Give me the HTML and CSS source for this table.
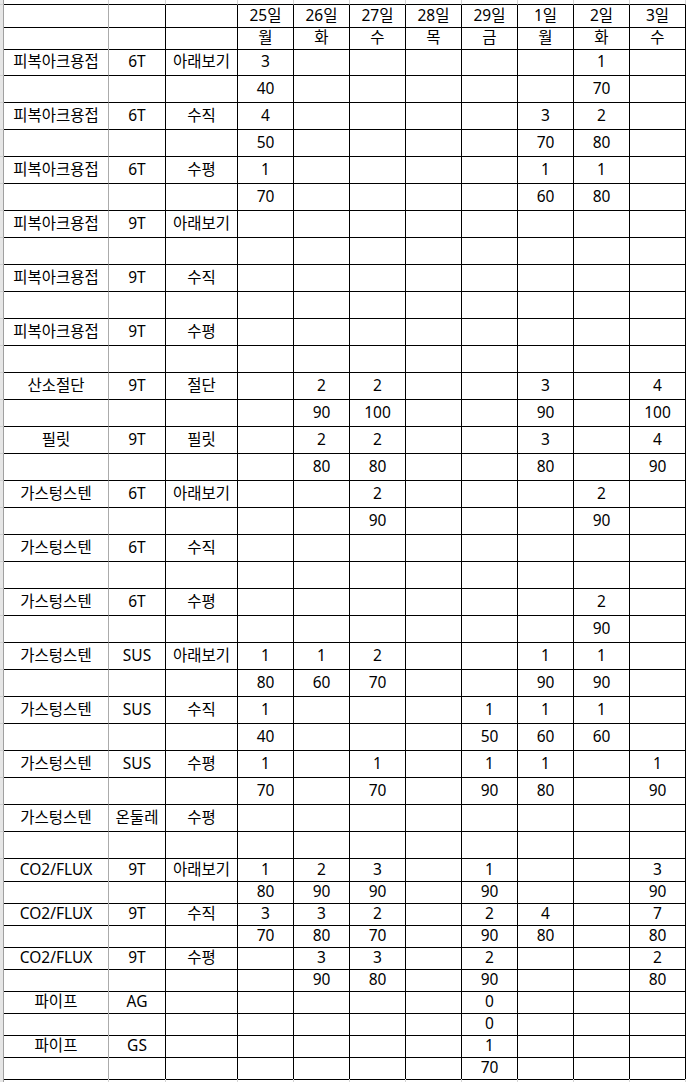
FILE: index.html
```html
<!DOCTYPE html>
<html lang="ko">
<head>
<meta charset="utf-8">
<title>일정표</title>
<link rel="stylesheet" href="styles.css">
</head>
<body>
<div class="sheet">
<div class="row edge top"><div class="rh"></div><div></div><div></div><div></div><div></div><div></div><div></div><div></div><div></div><div></div><div></div><div></div></div>
<div class="row s"><div class="rh"></div><div></div><div></div><div></div><div>25일</div><div>26일</div><div>27일</div><div>28일</div><div>29일</div><div>1일</div><div>2일</div><div>3일</div></div>
<div class="row s"><div class="rh"></div><div></div><div></div><div></div><div>월</div><div>화</div><div>수</div><div>목</div><div>금</div><div>월</div><div>화</div><div>수</div></div>

<div class="row"><div class="rh"></div><div>피복아크용접</div><div>6T</div><div>아래보기</div><div>3</div><div></div><div></div><div></div><div></div><div></div><div>1</div><div></div></div>
<div class="row"><div class="rh"></div><div></div><div></div><div></div><div>40</div><div></div><div></div><div></div><div></div><div></div><div>70</div><div></div></div>
<div class="row"><div class="rh"></div><div>피복아크용접</div><div>6T</div><div>수직</div><div>4</div><div></div><div></div><div></div><div></div><div>3</div><div>2</div><div></div></div>
<div class="row"><div class="rh"></div><div></div><div></div><div></div><div>50</div><div></div><div></div><div></div><div></div><div>70</div><div>80</div><div></div></div>
<div class="row"><div class="rh"></div><div>피복아크용접</div><div>6T</div><div>수평</div><div>1</div><div></div><div></div><div></div><div></div><div>1</div><div>1</div><div></div></div>
<div class="row"><div class="rh"></div><div></div><div></div><div></div><div>70</div><div></div><div></div><div></div><div></div><div>60</div><div>80</div><div></div></div>
<div class="row"><div class="rh"></div><div>피복아크용접</div><div>9T</div><div>아래보기</div><div></div><div></div><div></div><div></div><div></div><div></div><div></div><div></div></div>
<div class="row"><div class="rh"></div><div></div><div></div><div></div><div></div><div></div><div></div><div></div><div></div><div></div><div></div><div></div></div>
<div class="row"><div class="rh"></div><div>피복아크용접</div><div>9T</div><div>수직</div><div></div><div></div><div></div><div></div><div></div><div></div><div></div><div></div></div>
<div class="row"><div class="rh"></div><div></div><div></div><div></div><div></div><div></div><div></div><div></div><div></div><div></div><div></div><div></div></div>
<div class="row"><div class="rh"></div><div>피복아크용접</div><div>9T</div><div>수평</div><div></div><div></div><div></div><div></div><div></div><div></div><div></div><div></div></div>
<div class="row"><div class="rh"></div><div></div><div></div><div></div><div></div><div></div><div></div><div></div><div></div><div></div><div></div><div></div></div>
<div class="row"><div class="rh"></div><div>산소절단</div><div>9T</div><div>절단</div><div></div><div>2</div><div>2</div><div></div><div></div><div>3</div><div></div><div>4</div></div>
<div class="row"><div class="rh"></div><div></div><div></div><div></div><div></div><div>90</div><div>100</div><div></div><div></div><div>90</div><div></div><div>100</div></div>
<div class="row"><div class="rh"></div><div>필릿</div><div>9T</div><div>필릿</div><div></div><div>2</div><div>2</div><div></div><div></div><div>3</div><div></div><div>4</div></div>
<div class="row"><div class="rh"></div><div></div><div></div><div></div><div></div><div>80</div><div>80</div><div></div><div></div><div>80</div><div></div><div>90</div></div>
<div class="row"><div class="rh"></div><div>가스텅스텐</div><div>6T</div><div>아래보기</div><div></div><div></div><div>2</div><div></div><div></div><div></div><div>2</div><div></div></div>
<div class="row"><div class="rh"></div><div></div><div></div><div></div><div></div><div></div><div>90</div><div></div><div></div><div></div><div>90</div><div></div></div>
<div class="row"><div class="rh"></div><div>가스텅스텐</div><div>6T</div><div>수직</div><div></div><div></div><div></div><div></div><div></div><div></div><div></div><div></div></div>
<div class="row"><div class="rh"></div><div></div><div></div><div></div><div></div><div></div><div></div><div></div><div></div><div></div><div></div><div></div></div>
<div class="row"><div class="rh"></div><div>가스텅스텐</div><div>6T</div><div>수평</div><div></div><div></div><div></div><div></div><div></div><div></div><div>2</div><div></div></div>
<div class="row"><div class="rh"></div><div></div><div></div><div></div><div></div><div></div><div></div><div></div><div></div><div></div><div>90</div><div></div></div>
<div class="row"><div class="rh"></div><div>가스텅스텐</div><div>SUS</div><div>아래보기</div><div>1</div><div>1</div><div>2</div><div></div><div></div><div>1</div><div>1</div><div></div></div>
<div class="row"><div class="rh"></div><div></div><div></div><div></div><div>80</div><div>60</div><div>70</div><div></div><div></div><div>90</div><div>90</div><div></div></div>
<div class="row"><div class="rh"></div><div>가스텅스텐</div><div>SUS</div><div>수직</div><div>1</div><div></div><div></div><div></div><div>1</div><div>1</div><div>1</div><div></div></div>
<div class="row"><div class="rh"></div><div></div><div></div><div></div><div>40</div><div></div><div></div><div></div><div>50</div><div>60</div><div>60</div><div></div></div>
<div class="row"><div class="rh"></div><div>가스텅스텐</div><div>SUS</div><div>수평</div><div>1</div><div></div><div>1</div><div></div><div>1</div><div>1</div><div></div><div>1</div></div>
<div class="row"><div class="rh"></div><div></div><div></div><div></div><div>70</div><div></div><div>70</div><div></div><div>90</div><div>80</div><div></div><div>90</div></div>
<div class="row"><div class="rh"></div><div>가스텅스텐</div><div>온둘레</div><div>수평</div><div></div><div></div><div></div><div></div><div></div><div></div><div></div><div></div></div>
<div class="row"><div class="rh"></div><div></div><div></div><div></div><div></div><div></div><div></div><div></div><div></div><div></div><div></div><div></div></div>

<div class="row s"><div class="rh"></div><div>CO2/FLUX</div><div>9T</div><div>아래보기</div><div>1</div><div>2</div><div>3</div><div></div><div>1</div><div></div><div></div><div>3</div></div>
<div class="row s"><div class="rh"></div><div></div><div></div><div></div><div>80</div><div>90</div><div>90</div><div></div><div>90</div><div></div><div></div><div>90</div></div>
<div class="row s"><div class="rh"></div><div>CO2/FLUX</div><div>9T</div><div>수직</div><div>3</div><div>3</div><div>2</div><div></div><div>2</div><div>4</div><div></div><div>7</div></div>
<div class="row s"><div class="rh"></div><div></div><div></div><div></div><div>70</div><div>80</div><div>70</div><div></div><div>90</div><div>80</div><div></div><div>80</div></div>
<div class="row s"><div class="rh"></div><div>CO2/FLUX</div><div>9T</div><div>수평</div><div></div><div>3</div><div>3</div><div></div><div>2</div><div></div><div></div><div>2</div></div>
<div class="row s"><div class="rh"></div><div></div><div></div><div></div><div></div><div>90</div><div>80</div><div></div><div>90</div><div></div><div></div><div>80</div></div>
<div class="row s"><div class="rh"></div><div>파이프</div><div>AG</div><div></div><div></div><div></div><div></div><div></div><div>0</div><div></div><div></div><div></div></div>
<div class="row s"><div class="rh"></div><div></div><div></div><div></div><div></div><div></div><div></div><div></div><div>0</div><div></div><div></div><div></div></div>
<div class="row s"><div class="rh"></div><div>파이프</div><div>GS</div><div></div><div></div><div></div><div></div><div></div><div>1</div><div></div><div></div><div></div></div>
<div class="row s"><div class="rh"></div><div></div><div></div><div></div><div></div><div></div><div></div><div></div><div>70</div><div></div><div></div><div></div></div>
<div class="row edge bottom"><div class="rh"></div><div></div><div></div><div></div><div></div><div></div><div></div><div></div><div></div><div></div><div></div><div></div></div>
</div>
</body>
</html>
```
FILE: styles.css
```css
* {
  box-sizing: border-box;
}

html, body {
  margin: 0;
  padding: 0;
  background: #ffffff;
}

body {
  font-family: "Noto Sans", "Noto Sans CJK KR", sans-serif;
  font-size: 15.5px;
  color: #000000;
  overflow: hidden;
}

.sheet {
  width: 689px;
  height: 1082px;
  display: flex;
  flex-direction: column;
}

.row {
  display: grid;
  grid-template-columns: 4px 105px 57px 72px repeat(8, 56px);
  height: 27px;
  flex: none;
}

.row.s {
  height: 22px;
}

.row > div {
  border-right: 1px solid #000000;
  border-bottom: 1px solid #000000;
  display: flex;
  align-items: center;
  justify-content: center;
  white-space: nowrap;
  line-height: 20px;
  padding-bottom: 2px;
}

.row > div:nth-child(2) {
  border-right-color: #ababab;
}

.row > .rh {
  background: #e6e6e6;
  border-right-color: #a0a0a0;
  border-bottom-color: #d0d0d0;
  padding: 0;
}

.row.top {
  height: 5px;
}

.row.top > div {
  border-right-color: #d4d4d4;
  padding: 0;
}

.row.top > .rh {
  border-right-color: #a0a0a0;
  border-bottom-color: #d0d0d0;
}

.row.bottom {
  height: 4px;
}

.row.bottom > div {
  border-right-color: #d4d4d4;
  border-bottom: none;
  padding: 0;
}

.row.bottom > .rh {
  border-right-color: #a0a0a0;
}
```
